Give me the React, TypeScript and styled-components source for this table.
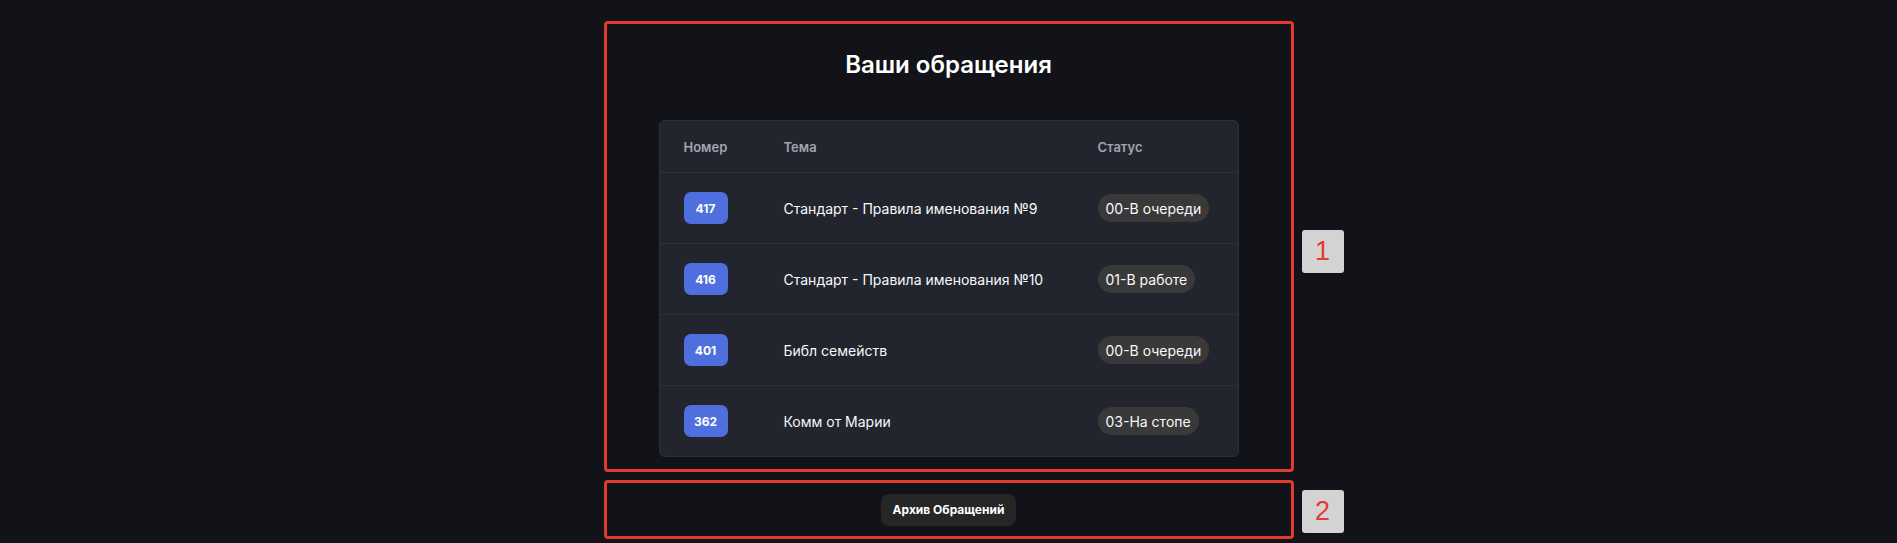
import React from "react";
import styled, { createGlobalStyle } from "styled-components";

const GlobalStyle = createGlobalStyle`
  html, body {
    margin: 0;
    padding: 0;
    background: #121318;
    font-family: Inter, "Noto Sans", sans-serif;
  }
  * { box-sizing: border-box; }
`;

const Page = styled.div`
  min-height: 543px;
  padding-top: 21px;
  display: flex;
  flex-direction: column;
  align-items: center;
  gap: 8px;
`;

const Section = styled.section<{ $pad: string }>`
  position: relative;
  width: 690px;
  border: 3px solid #e23a2f;
  border-radius: 4px;
  padding: ${(p) => p.$pad};
  display: flex;
  flex-direction: column;
  align-items: center;
`;

const Marker = styled.div<{ $top: number }>`
  position: absolute;
  left: calc(100% + 11px);
  top: ${(p) => p.$top}px;
  width: 42px;
  height: 43px;
  border-radius: 3px;
  background: #d3d3d3;
  color: #e53935;
  font-family: "Liberation Sans", Arial, sans-serif;
  font-size: 27px;
  display: flex;
  align-items: center;
  justify-content: center;
`;

const Title = styled.h1`
  margin: 0 0 41px;
  font-size: 24px;
  line-height: 29px;
  font-weight: 600;
  color: #ffffff;
`;

const Card = styled.div`
  width: 580px;
  background: #22252d;
  border: 1px solid #2d3039;
  border-radius: 6px;
  overflow: hidden;
`;

const Row = styled.div<{ $head?: boolean }>`
  display: grid;
  grid-template-columns: 100px 314px 1fr;
  align-items: center;
  padding-left: 24px;
  height: ${(p) => (p.$head ? 52 : 71)}px;
  border-bottom: 1px solid #2d3039;
  &:last-child {
    border-bottom: none;
    height: 70px;
  }
`;

const HeadCell = styled.div`
  font-size: 13px;
  font-weight: 600;
  color: #a0a5b0;
`;

const Cell = styled.div`
  font-size: 14px;
  font-weight: 400;
  color: #f7f8fa;
`;

const NumBadge = styled.span`
  display: inline-flex;
  align-items: center;
  justify-content: center;
  height: 32px;
  padding: 0 10px;
  min-width: 44px;
  border-radius: 7px;
  background: #4e6fdd;
  color: #ffffff;
  font-size: 12px;
  font-weight: 700;
`;

const StatusPill = styled.span`
  display: inline-flex;
  align-items: center;
  height: 28px;
  padding: 0 8px;
  border-radius: 14px;
  background: #393939;
  color: #f7f8fa;
  font-size: 14px;
`;

const ButtonBar = styled.div`
  height: 53px;
  display: flex;
  align-items: center;
  justify-content: center;
`;

const ArchiveButton = styled.button`
  height: 32px;
  padding: 0 12px;
  border: none;
  border-radius: 8px;
  background: #262626;
  color: #ffffff;
  font-family: Inter, "Noto Sans", sans-serif;
  font-size: 12px;
  font-weight: 700;
  cursor: pointer;
`;

const tickets = [
  { id: 417, topic: "Стандарт - Правила именования №9", status: "00-В очереди" },
  { id: 416, topic: "Стандарт - Правила именования №10", status: "01-В работе" },
  { id: 401, topic: "Библ семейств", status: "00-В очереди" },
  { id: 362, topic: "Комм от Марии", status: "03-На стопе" },
];

export default function App() {
  return (
    <>
      <GlobalStyle />
      <Page>
        <Section $pad="26px 52px 12px">
          <Title>Ваши обращения</Title>
          <Card>
            <Row $head>
              <HeadCell>Номер</HeadCell>
              <HeadCell>Тема</HeadCell>
              <HeadCell>Статус</HeadCell>
            </Row>
            {tickets.map((t) => (
              <Row key={t.id}>
                <div>
                  <NumBadge>{t.id}</NumBadge>
                </div>
                <Cell>{t.topic}</Cell>
                <div>
                  <StatusPill>{t.status}</StatusPill>
                </div>
              </Row>
            ))}
          </Card>
          <Marker $top={206}>1</Marker>
        </Section>
        <Section $pad="0">
          <ButtonBar>
            <ArchiveButton>Архив Обращений</ArchiveButton>
          </ButtonBar>
          <Marker $top={7}>2</Marker>
        </Section>
      </Page>
    </>
  );
}
